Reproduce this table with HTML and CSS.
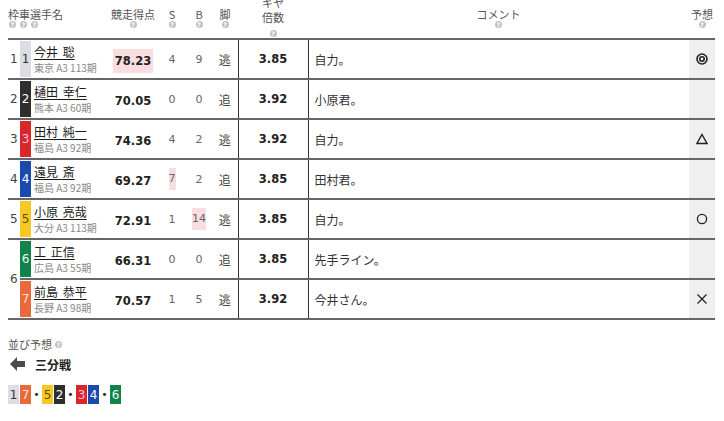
FILE: index.html
```html
<!DOCTYPE html>
<html lang="ja">
<head>
<meta charset="utf-8">
<title>出走表</title>
<link rel="stylesheet" href="styles.css">
</head>
<body>
<div class="page">
  <table class="race">
    <colgroup>
      <col class="w-waku"><col class="w-player"><col class="w-pts"><col class="w-s"><col class="w-b"><col class="w-k"><col class="w-gear"><col class="w-cmt"><col class="w-yoso">
    </colgroup>
    <thead>
      <tr>
        <th colspan="2" class="h-name">枠車選手名<div class="qrow"><i class="q">?</i><i class="q">?</i><i class="q">?</i></div></th>
        <th>競走得点<div class="qrow"><i class="q">?</i></div></th>
        <th>S<div class="qrow"><i class="q">?</i></div></th>
        <th>B<div class="qrow"><i class="q">?</i></div></th>
        <th>脚<div class="qrow"><i class="q">?</i></div></th>
        <th class="h-gear">ギヤ<br>倍数<br><i class="q">?</i></th>
        <th>コメント<div class="qrow"><i class="q">?</i></div></th>
        <th>予想<div class="qrow"><i class="q">?</i></div></th>
      </tr>
    </thead>
    <tbody>
      <tr>
        <td class="waku">1</td>
        <td class="player"><div class="pl"><span class="car c1">1</span><div><div class="pname">今井 聡</div><div class="psub">東京 A3 113期</div></div></div></td>
        <td><span class="pts hl">78.23</span></td>
        <td class="num">4</td><td class="num">9</td><td class="kyaku">逃</td>
        <td class="gear">3.85</td><td class="cmt">自力。</td>
        <td class="yoso"><svg class="mark" width="12" height="12" viewBox="0 0 12 12" aria-label="◎"><circle cx="6" cy="6" r="5" fill="none" stroke="#222" stroke-width="1.6"/><circle cx="6" cy="6" r="2.2" fill="none" stroke="#222" stroke-width="1.6"/></svg></td>
      </tr>
      <tr>
        <td class="waku">2</td>
        <td class="player"><div class="pl"><span class="car c2">2</span><div><div class="pname">樋田 幸仁</div><div class="psub">熊本 A3 60期</div></div></div></td>
        <td><span class="pts">70.05</span></td>
        <td class="num">0</td><td class="num">0</td><td class="kyaku">追</td>
        <td class="gear">3.92</td><td class="cmt">小原君。</td><td class="yoso"></td>
      </tr>
      <tr>
        <td class="waku">3</td>
        <td class="player"><div class="pl"><span class="car c3">3</span><div><div class="pname">田村 純一</div><div class="psub">福島 A3 92期</div></div></div></td>
        <td><span class="pts">74.36</span></td>
        <td class="num">4</td><td class="num">2</td><td class="kyaku">逃</td>
        <td class="gear">3.92</td><td class="cmt">自力。</td>
        <td class="yoso"><svg class="mark" width="12" height="12" viewBox="0 0 12 12" aria-label="△"><polygon points="6,1.5 11,10.5 1,10.5" fill="none" stroke="#222" stroke-width="1.4" stroke-linejoin="miter"/></svg></td>
      </tr>
      <tr>
        <td class="waku">4</td>
        <td class="player"><div class="pl"><span class="car c4">4</span><div><div class="pname">遠見 斎</div><div class="psub">福島 A3 92期</div></div></div></td>
        <td><span class="pts">69.27</span></td>
        <td class="num"><span class="nhl">7</span></td><td class="num">2</td><td class="kyaku">追</td>
        <td class="gear">3.85</td><td class="cmt">田村君。</td><td class="yoso"></td>
      </tr>
      <tr>
        <td class="waku">5</td>
        <td class="player"><div class="pl"><span class="car c5">5</span><div><div class="pname">小原 亮哉</div><div class="psub">大分 A3 113期</div></div></div></td>
        <td><span class="pts">72.91</span></td>
        <td class="num">1</td><td class="num"><span class="nhl">14</span></td><td class="kyaku">逃</td>
        <td class="gear">3.85</td><td class="cmt">自力。</td>
        <td class="yoso"><svg class="mark" width="12" height="12" viewBox="0 0 12 12" aria-label="○"><circle cx="6" cy="6" r="4.6" fill="none" stroke="#222" stroke-width="1.3"/></svg></td>
      </tr>
      <tr>
        <td class="waku" rowspan="2">6</td>
        <td class="player"><div class="pl"><span class="car c6">6</span><div><div class="pname">工 正信</div><div class="psub">広島 A3 55期</div></div></div></td>
        <td><span class="pts">66.31</span></td>
        <td class="num">0</td><td class="num">0</td><td class="kyaku">追</td>
        <td class="gear">3.85</td><td class="cmt">先手ライン。</td><td class="yoso"></td>
      </tr>
      <tr>
        <td class="player"><div class="pl"><span class="car c7">7</span><div><div class="pname">前島 恭平</div><div class="psub">長野 A3 98期</div></div></div></td>
        <td><span class="pts">70.57</span></td>
        <td class="num">1</td><td class="num">5</td><td class="kyaku">逃</td>
        <td class="gear">3.92</td><td class="cmt">今井さん。</td>
        <td class="yoso"><svg class="mark" width="12" height="12" viewBox="0 0 12 12" aria-label="×"><path d="M1.5 1.5 L10.5 10.5 M10.5 1.5 L1.5 10.5" stroke="#222" stroke-width="1.3" fill="none"/></svg></td>
      </tr>
    </tbody>
  </table>

  <div class="narabi">
    <div class="n-title">並び予想 <i class="q">?</i></div>
    <div class="n-sen">
      <svg class="arrow" width="15" height="14" viewBox="0 0 15 14"><polygon points="0,7 7,0 7,4 15,4 15,10 7,10 7,14" fill="#4a4a4a"/></svg>
      <span class="sen">三分戦</span>
    </div>
    <div class="n-line">
      <span class="nb c1">1</span><span class="nb c7">7</span><span class="dot">•</span><span class="nb c5">5</span><span class="nb c2">2</span><span class="dot">•</span><span class="nb c3">3</span><span class="nb c4">4</span><span class="dot">•</span><span class="nb c6">6</span>
    </div>
  </div>
</div>
</body>
</html>
```

FILE: styles.css
```css
body {
  margin: 0;
  background: #fff;
  color: #333;
  font-family: "Noto Sans CJK JP", "DejaVu Sans", sans-serif;
}

.page {
  padding: 0 8px;
}

.race {
  border-collapse: collapse;
  table-layout: fixed;
  width: 707px;
  margin-top: -4px;
}

.w-waku { width: 12px; }
.w-player { width: 88px; }
.w-pts { width: 50px; }
.w-s { width: 28px; }
.w-b { width: 26px; }
.w-k { width: 26px; }
.w-gear { width: 70px; }
.w-cmt { width: 381px; }
.w-yoso { width: 26px; }

.race th {
  font-weight: normal;
  font-size: 11px;
  line-height: 13px;
  color: #555;
  padding: 1px 0 0;
  border-bottom: 2px solid #666;
  vertical-align: middle;
  text-align: center;
}

.race th.h-name {
  text-align: left;
}

.race th.h-gear {
  line-height: 14px;
  padding: 0;
}

.qrow {
  line-height: 12px;
  display: flex;
  justify-content: center;
  gap: 4px;
}

.h-name .qrow {
  justify-content: flex-start;
  padding-left: 1px;
}

.q {
  display: inline-block;
  width: 7px;
  height: 7px;
  border-radius: 50%;
  background: #c2c2c2;
  color: #fff;
  font-style: normal;
  font-size: 6px;
  line-height: 7px;
  text-align: center;
  vertical-align: middle;
  font-family: "DejaVu Sans", sans-serif;
  font-weight: bold;
}

.race td {
  height: 38px;
  padding: 0;
  border-bottom: 2px solid #666;
  text-align: center;
  vertical-align: middle;
}

.race td.waku {
  text-align: left;
  padding-left: 2px;
  font-family: "DejaVu Sans", sans-serif;
  font-size: 12px;
  color: #444;
}

.race td.player {
  text-align: left;
}

.pl {
  display: flex;
  align-items: center;
  gap: 3px;
}

.car {
  display: flex;
  flex: none;
  width: 11px;
  height: 36px;
  align-items: center;
  justify-content: center;
  font-family: "DejaVu Sans", sans-serif;
  font-size: 12px;
}

.c1 { background: #dadde4; color: #333; }
.c2 { background: #2e2e2e; color: #fff; }
.c3 { background: #d8262a; color: #fbd; }
.c4 { background: #1a4aad; color: #fff; }
.c5 { background: #f5c922; color: #6b4a1a; }
.c6 { background: #12844b; color: #e8fff0; }
.c7 { background: #e8693a; color: #ffe4d4; }

.pname {
  font-size: 12px;
  line-height: 16px;
  color: #1a1a1a;
  text-decoration: underline;
  text-underline-offset: 2px;
  white-space: pre;
  word-spacing: 2px;
}

.psub {
  font-size: 10px;
  line-height: 14px;
  color: #888;
  margin-top: 1px;
  white-space: nowrap;
}

.pts {
  display: inline-block;
  padding: 5px 2px;
  font-family: "DejaVu Sans", sans-serif;
  font-weight: bold;
  font-size: 11.5px;
  line-height: 14px;
  color: #222;
}

.hl, .nhl {
  background: #f9dde0;
}

.race td.num {
  font-family: "DejaVu Sans", sans-serif;
  font-size: 11px;
  color: #666;
}

.nhl {
  display: inline-block;
  padding: 4px 0;
  line-height: 14px;
}

.race td.kyaku {
  font-family: "Noto Sans CJK JP", sans-serif;
  font-size: 12px;
  color: #444;
}

.race td.gear {
  border-left: 1px solid #333;
  font-family: "DejaVu Sans", sans-serif;
  font-weight: bold;
  font-size: 11.5px;
  color: #222;
}

.race td.cmt {
  border-left: 1px solid #333;
  text-align: left;
  padding-left: 6px;
  font-size: 12px;
  color: #333;
}

.race td.yoso {
  background: #efefef;
}

.mark {
  display: block;
  margin: 0 auto;
}

.narabi {
  padding-top: 17px;
}

.n-title {
  font-size: 11px;
  line-height: 14px;
  color: #555;
  display: flex;
  align-items: center;
  gap: 3px;
}

.n-sen {
  margin-top: 5px;
  height: 16px;
  display: flex;
  align-items: center;
  padding-left: 2px;
}

.arrow {
  display: block;
  margin-right: 10px;
}

.sen {
  font-size: 12px;
  font-weight: bold;
  color: #222;
}

.n-line {
  margin-top: 13px;
  display: flex;
  align-items: center;
  gap: 1px;
}

.nb {
  display: flex;
  width: 11px;
  height: 19px;
  align-items: center;
  justify-content: center;
  font-family: "DejaVu Sans", sans-serif;
  font-size: 12px;
}

.dot {
  width: 9px;
  text-align: center;
  font-size: 10px;
  color: #222;
  font-family: "DejaVu Sans", sans-serif;
}
```
